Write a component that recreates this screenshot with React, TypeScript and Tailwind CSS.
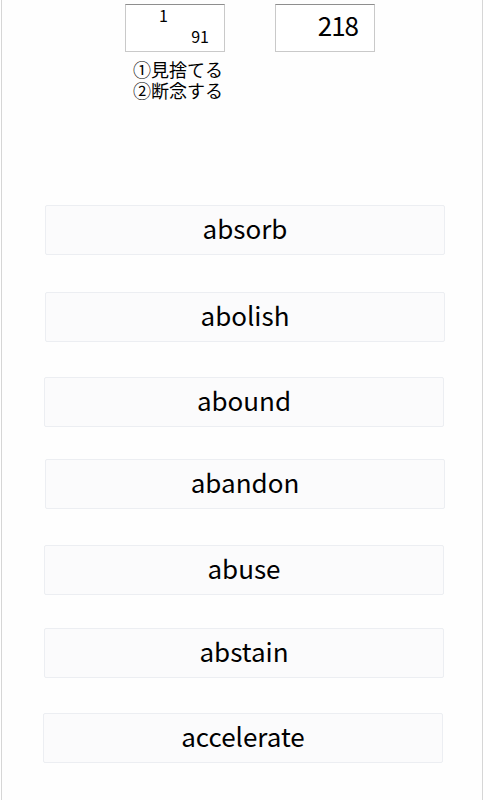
import React from "react";

const words = [
  { text: "absorb", cls: "mt-[104px] ml-[43px]" },
  { text: "abolish", cls: "mt-[37px] ml-[43px]" },
  { text: "abound", cls: "mt-[35px] ml-[42px]" },
  { text: "abandon", cls: "mt-[32px] ml-[43px]" },
  { text: "abuse", cls: "mt-[36px] ml-[42px]" },
  { text: "abstain", cls: "mt-[33px] ml-[42px]" },
  { text: "accelerate", cls: "mt-[35px] ml-[41px]" },
];

const jp = '"Noto Sans CJK JP", "Noto Sans", sans-serif';

export default function App() {
  return (
    <div className="w-[486px] h-[800px] bg-white overflow-hidden" style={{ fontFamily: jp }}>
      <div className="ml-px w-[482px] h-full border-x border-[#d6d6d6] bg-[#fefefe]">
        {/* counters */}
        <div className="flex gap-[50px] pt-[4px] pl-[123px]">
          <div className="flex flex-col">
            <div className="relative w-[100px] h-[48px] border border-[#c9c9c9] border-t-[#8e8e8e] bg-white">
              <span className="absolute left-[33px] top-[0px] text-[16px] leading-[20px] text-black">1</span>
              <span className="absolute right-[15px] top-[21px] text-[16px] leading-[20px] text-black">91</span>
            </div>
            <div className="pl-[8px] pt-[7px] text-[18px] leading-[21px] text-black">
              <div>①見捨てる</div>
              <div>②断念する</div>
            </div>
          </div>
          <div className="w-[100px] h-[48px] border border-[#c9c9c9] border-t-[#8e8e8e] bg-white flex items-start justify-end pr-[16px] pt-[3px]">
            <span className="text-[26px] leading-[34px] tracking-[-1px] text-black">218</span>
          </div>
        </div>

        {/* choices */}
        <div className="flex flex-col">
          {words.map((w) => (
            <button
              key={w.text}
              className={`${w.cls} w-[400px] h-[50px] flex items-center justify-center pb-[5px] border border-[#eceef2] rounded-[2px] bg-[#fbfbfc] text-[26px] text-black`}
            >
              {w.text}
            </button>
          ))}
        </div>
      </div>
    </div>
  );
}
